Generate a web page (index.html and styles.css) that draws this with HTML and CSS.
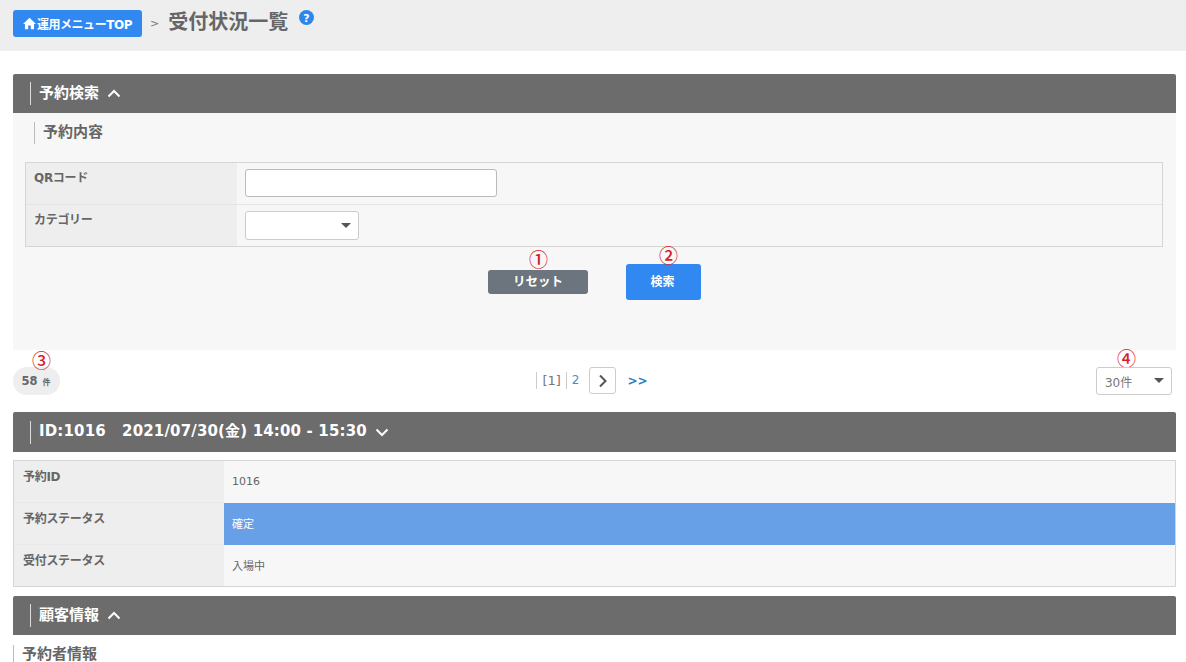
FILE: index.html
```html
<!DOCTYPE html>
<html lang="ja">
<head>
<meta charset="utf-8">
<title>受付状況一覧</title>
<link rel="stylesheet" href="styles.css">
</head>
<body>
<header class="top">
  <a class="crumb"><svg class="home" viewBox="0 0 12 12"><path d="M6 .8 0 6.400h1.800V11.400h3V7.800h2.400v3.600h3V6.400H12z"/></svg>運用メニューTOP</a>
  <span class="sep">&gt;</span>
  <h1 class="title">受付状況一覧</h1>
  <svg class="help" viewBox="0 0 15 15"><circle cx="7.500" cy="7.500" r="7.500" fill="#2f86ea"/><text x="7.500" y="11.600" text-anchor="middle" class="help-q">?</text></svg>
</header>
<main class="main">
  <section class="panel">
    <div class="bar"><span class="bar-title">予約検索</span><svg class="chev" viewBox="0 0 14 9"><path d="M1.500 7.500 7 2l5.500 5.500"/></svg></div>
    <div class="panel-body">
      <h3 class="sub">予約内容</h3>
      <div class="form-table">
        <div class="row"><div class="label">QRコード</div><div class="value"><input class="input" type="text"></div></div>
        <div class="row"><div class="label">カテゴリー</div><div class="value"><div class="select select-cat"><i class="caret"></i></div></div></div>
      </div>
      <div class="actions">
        <div class="anno-wrap"><span class="anno anno-1">①</span><button class="btn btn-reset">リセット</button></div>
        <div class="anno-wrap"><span class="anno anno-2">②</span><button class="btn btn-search">検索</button></div>
      </div>
    </div>
  </section>
  <div class="pager-row">
    <div class="anno-wrap"><span class="anno anno-3">③</span><div class="count">58<small>件</small></div></div>
    <nav class="pager">
      <span class="cur">[1]</span><a class="num">2</a>
      <a class="next"><svg viewBox="0 0 10 14"><path d="M2 1.500 7.500 7 2 12.500"/></svg></a>
      <a class="last">&gt;&gt;</a>
    </nav>
    <div class="anno-wrap"><span class="anno anno-4">④</span><div class="select select-size">30件<i class="caret"></i></div></div>
  </div>
  <section class="record">
    <div class="bar bar-tall"><span class="bar-title bar-title-id">ID:1016&nbsp;&nbsp; 2021/07/30(金) 14:00 - 15:30</span><svg class="chev" viewBox="0 0 14 9"><path d="M1.500 1.500 7 7l5.500-5.500"/></svg></div>
    <div class="info-table">
      <div class="row"><div class="label">予約ID</div><div class="value">1016</div></div>
      <div class="row"><div class="label">予約ステータス</div><div class="value value-blue">確定</div></div>
      <div class="row"><div class="label">受付ステータス</div><div class="value">入場中</div></div>
    </div>
  </section>
  <section class="customer">
    <div class="bar"><span class="bar-title">顧客情報</span><svg class="chev" viewBox="0 0 14 9"><path d="M1.500 7.500 7 2l5.500 5.500"/></svg></div>
    <h3 class="sub sub-cust">予約者情報</h3>
  </section>
</main>
</body>
</html>
```
FILE: styles.css
```css
* { box-sizing: border-box; }
html, body { margin: 0; height: 662px; overflow: hidden; background: #fff; }
body { font-family: "DejaVu Sans", "Noto Sans CJK JP", sans-serif; color: #666; font-size: 12px; }

.top { height: 51px; background: #eeeeee; padding: 10px 13px 0; display: flex; align-items: flex-start; }
.crumb { width: 129px; height: 27px; background: #3088f0; border-radius: 3px; color: #fff; font-size: 12px; font-weight: 700; display: flex; align-items: center; justify-content: center; letter-spacing: -.45px; white-space: nowrap; }
.home { width: 13px; height: 13px; fill: #fff; margin-right: 1px; flex: none; }
.sep { font-size: 11px; color: #777; margin: 7px 9px 0 8px; }
.title { margin: -1px 0 0; font-size: 20px; line-height: 26px; font-weight: 700; color: #666; white-space: nowrap; }
.help { width: 15px; height: 15px; margin-left: 11px; }
.help-q { font: 700 11px "DejaVu Sans", sans-serif; fill: #fff; }

.main { padding: 23px 10px 0 13px; }
.bar { height: 39px; background: #6c6c6c; color: #fff; display: flex; align-items: center; padding-left: 17px; border-radius: 2px 2px 0 0; }
.bar-tall { height: 40px; }
.bar-title { border-left: 1px solid #ddd; padding-left: 8px; height: 23px; line-height: 23px; font-size: 15px; font-weight: 700; white-space: nowrap; }
.bar-title-id { letter-spacing: .16px; line-height: 21px; }
.chev { width: 14px; height: 9px; margin-left: 8px; fill: none; stroke: #fff; stroke-width: 2; }

.panel-body { background: #f7f7f7; height: 237px; padding: 9px 13px 0 12px; }
.sub { margin: 0 0 0 9px; border-left: 1px solid #bbb; padding-left: 8px; height: 22px; line-height: 20px; font-size: 15px; font-weight: 700; color: #666; }

.form-table { margin-top: 18px; border: 1px solid #d5d5d5; }
.form-table .row { display: flex; height: 41px; }
.form-table .row + .row { height: 42px; border-top: 1px solid #e4e4e4; }
.label { background: #eeeeee; font-size: 12px; font-weight: 700; color: #666; padding: 5px 8px 0; letter-spacing: -.3px; }
.form-table .label { width: 211px; }
.form-table .value { padding: 6px 0 0 8px; flex: 1; }
.input { display: block; width: 252px; height: 28px; background: #fff; border: 1px solid #bbb; border-radius: 3px; }
.select { position: relative; background: #fff; border: 1px solid #ccc; border-radius: 3px; }
.select-cat { width: 114px; height: 29px; }
.caret { position: absolute; right: 7px; top: 11px; width: 0; height: 0; border-left: 5.500px solid transparent; border-right: 5.500px solid transparent; border-top: 5px solid #555; }

.actions { display: flex; justify-content: center; align-items: flex-end; gap: 38px; margin-top: 17px; padding-left: 1px; }
.anno-wrap { position: relative; }
.anno { position: absolute; color: #d81e2c; font-size: 19px; line-height: 20px; font-weight: 500; font-family: "Noto Sans CJK JP", sans-serif; white-space: nowrap; }
.btn { display: block; border: 0; color: #fff; font-family: inherit; font-weight: 700; font-size: 12px; padding: 0; }
.btn-reset { width: 100px; height: 24px; background: #6c757d; border-radius: 3px; margin-bottom: 6px; font-size: 12.500px; padding-bottom: 4px; }
.btn-search { width: 75px; height: 36px; background: #3088f0; border-radius: 3px; padding: 0 2px 3px 0; }
.anno-1 { left: 41px; top: -21px; }
.anno-2 { left: 33px; top: -19px; }
.anno-3 { left: 19px; top: -17px; }
.anno-4 { left: 21px; top: -19px; }

.pager-row { display: flex; justify-content: space-between; align-items: flex-start; padding: 17px 4px 0 0; height: 62px; }
.count { width: 47px; height: 28px; background: #eeeeee; border-radius: 14px; font-size: 11.500px; font-weight: 700; color: #666; display: flex; align-items: center; justify-content: center; gap: 5px; padding-right: 1px; }
.count small { font-size: 8px; }
.pager { display: flex; align-items: center; height: 27px; font-size: 12px; margin-left: 28px; }
.cur, .num { border-left: 1px solid #ccc; height: 17px; line-height: 17px; padding: 0 5px; color: #777; }
.cur { font-size: 13px; }
.pager .num { color: #3f8fd0; padding-right: 10px; }
.next { width: 27px; height: 27px; border: 1px solid #ccc; border-radius: 3px; display: flex; align-items: center; justify-content: center; background: #fff; }
.next svg { width: 10px; height: 14px; fill: none; stroke: #555; stroke-width: 2; }
.last { color: #2f7fc0; font-weight: 700; margin-left: 11px; font-size: 12px; letter-spacing: 0; }
.select-size { width: 76px; height: 28px; font-size: 12px; color: #777; padding: 5px 0 0 8px; }
.select-size .caret { top: 10px; }

.info-table { margin-top: 8px; border: 1px solid #d5d5d5; background: #f7f7f7; }
.info-table .row { display: flex; height: 42px; }
.info-table .row:last-child { height: 41px; }
.info-table .label { width: 210px; padding: 6px 9px 0; border-bottom: 1px solid #e8e8e8; }
.info-table .row:last-child .label { border-bottom: 0; }
.info-table .value { flex: 1; font-size: 11px; color: #666; padding: 0 0 2px 8px; display: flex; align-items: center; }
.info-table .value-blue { background: #68a0e8; color: #fff; }

.customer { margin-top: 9px; }
.sub-cust { margin: 10px 0 0; padding-left: 8px; height: 22px; line-height: 18px; color: #666; }
```
